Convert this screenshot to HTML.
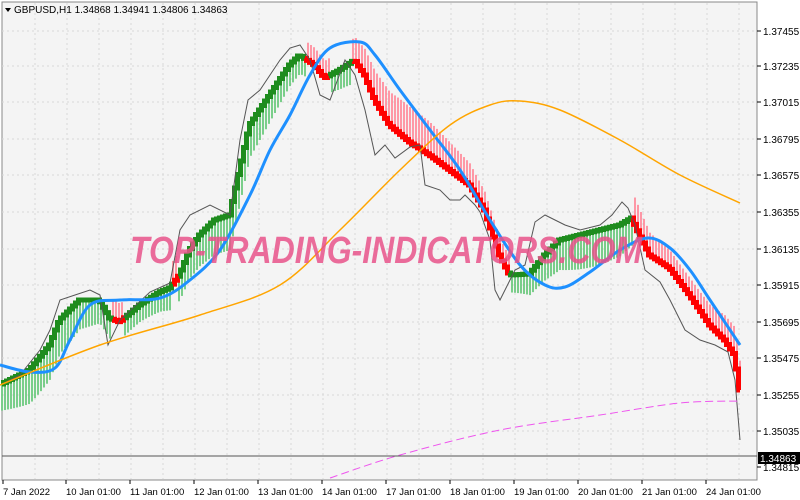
<!DOCTYPE html>
<html><head><meta charset="utf-8"><style>
html,body{margin:0;padding:0;background:#fff;width:800px;height:500px;overflow:hidden}
svg{display:block}
text{font-family:"Liberation Sans",sans-serif;font-size:10px;fill:#000}
</style></head><body>
<svg id="s" width="800" height="500" xmlns="http://www.w3.org/2000/svg">
<rect x="0" y="0" width="800" height="500" fill="#fff"/>
<rect x="2" y="2" width="755" height="478" fill="#f4f4f4" stroke="#888" stroke-width="1"/>
<g id="grid" stroke="#d8d8d8" stroke-dasharray="2,3" stroke-width="1"></g>
<g id="bars"></g>
<g id="lines"></g>
<text x="130" y="263" font-weight="bold" font-style="italic" textLength="512" lengthAdjust="spacingAndGlyphs" style="font-size:38px;fill:#e8528a;fill-opacity:0.85">TOP-TRADING-INDICATORS.COM</text>
<line x1="2" y1="456" x2="757" y2="456" stroke="#555" stroke-width="1"/>
<path d="M5 8 L11 8 L8 12 Z" fill="#000"/>
<text x="14" y="13">GBPUSD,H1  1.34868 1.34941 1.34806 1.34863</text>
<g id="ax"></g>
<rect x="758" y="452" width="42" height="12" fill="#000"/>
<text x="760" y="462" style="fill:#fff">1.34863</text>
</svg>
<script>
var NS="http://www.w3.org/2000/svg";
function el(p,t,a){var e=document.createElementNS(NS,t);for(var k in a)e.setAttribute(k,a[k]);document.getElementById(p).appendChild(e);return e;}
var prices=[["1.37455",31],["1.37235",66],["1.37015",102],["1.36795",139],["1.36575",175],["1.36355",212],["1.36135",249],["1.35915",285],["1.35695",322],["1.35475",358],["1.35255",395],["1.35035",431],["1.34815",467]];
prices.forEach(function(p){
 if(p[1]<450)el('grid','line',{x1:2,y1:p[1],x2:757,y2:p[1]});
 el('ax','line',{x1:757,y1:p[1],x2:761,y2:p[1],stroke:'#000'});
 var t=el('ax','text',{x:763,y:p[1]+4});t.textContent=p[0];});
for(var gx=35;gx<757;gx+=32)el('grid','line',{x1:gx,y1:3,x2:gx,y2:479});
var times=[["7 Jan 2022",3],["10 Jan 01:00",66],["11 Jan 01:00",130],["12 Jan 01:00",194],["13 Jan 01:00",258],["14 Jan 01:00",322],["17 Jan 01:00",386],["18 Jan 01:00",450],["19 Jan 01:00",514],["20 Jan 01:00",578],["21 Jan 01:00",642],["24 Jan 01:00",706]];
times.forEach(function(t,i){var x=t[1];
 el('ax','line',{x1:x,y1:480,x2:x,y2:484,stroke:'#000'});
 var e=el('ax','text',{x:x+(i==0?0:0),y:495,style:'font-size:9.5px'});e.textContent=t[0];});
function interp(pts,x){for(var i=0;i<pts.length-1;i++){if(x>=pts[i][0]&&x<=pts[i+1][0]){var f=(x-pts[i][0])/(pts[i+1][0]-pts[i][0]);return pts[i][1]+f*(pts[i+1][1]-pts[i][1]);}}return pts[pts.length-1][1];}
function pl(pts){return pts.map(function(p){return p[0]+','+p[1]}).join(' ');}
function smooth(pts){var d='M'+pts[0][0]+','+pts[0][1];for(var i=0;i<pts.length-1;i++){var p0=pts[i-1]||pts[i],p1=pts[i],p2=pts[i+1],p3=pts[i+2]||p2;
 d+=' C'+(p1[0]+(p2[0]-p0[0])/6)+','+(p1[1]+(p2[1]-p0[1])/6)+' '+(p2[0]-(p3[0]-p1[0])/6)+','+(p2[1]-(p3[1]-p1[1])/6)+' '+p2[0]+','+p2[1];}return d;}
var mid=[[0,385],[30,370],[50,345],[60,320],[80,300],[100,300],[110,318],[120,322],[140,305],[160,292],[170,288],[180,275],[190,250],[200,235],[215,220],[230,215],[240,170],[250,125],[270,95],[290,65],[300,55],[315,65],[325,78],[340,70],[355,60],[365,75],[375,100],[390,125],[410,142],[430,155],[450,170],[470,185],[485,210],[500,255],[510,275],[530,274],[545,255],[560,240],[580,235],[600,230],[620,225],[632,218],[640,235],[650,255],[670,268],[690,295],[710,325],[725,340],[735,355],[740,390]];
function isRed(x){return (x>112&&x<124)||(x>172&&x<178)||(x>305&&x<330)||(x>352&&x<510)||(x>632);}
for(var x=2;x<=740;x+=3){var y=interp(mid,x);var r=isRed(x);
 var L=26+9*Math.sin(x/29);
 el('bars','line',{x1:x,y1:y,x2:x,y2:r?y-L:y+L,stroke:r?'#ff8d9d':'#6cc97e','stroke-width':1.8});
}
for(var x=2;x<740;x+=3){var y1=interp(mid,x),y2=interp(mid,x+3);var r=isRed(x+1);
 var xm=x+1.5;
 el('lines','path',{d:'M'+x+','+y1+' H'+xm+' V'+y2+' H'+(x+3),fill:'none',stroke:r?'#ff0000':'#1e8c1e','stroke-width':5});}
var blk=[[0,385],[20,375],[40,350],[50,330],[60,300],[75,295],[90,290],[100,295],[108,345],[120,320],[150,292],[170,283],[180,230],[190,215],[210,205],[230,215],[240,140],[248,100],[260,90],[280,60],[290,48],[300,45],[310,60],[320,95],[330,100],[345,60],[355,75],[365,110],[375,155],[385,145],[395,158],[410,147],[420,145],[425,185],[440,190],[450,200],[460,200],[465,195],[475,205],[480,212],[490,240],[495,290],[500,300],[505,290],[515,270],[525,265],[535,222],[545,215],[555,220],[565,225],[580,230],[600,225],[612,215],[622,202],[628,208],[635,225],[645,270],[660,282],[670,300],[685,330],[700,340],[715,345],[728,352],[735,380],[740,440]];
el('lines','polyline',{points:pl(blk),fill:'none',stroke:'#555','stroke-width':1});
var blue=[[0,365],[30,372],[55,368],[70,340],[90,305],[120,300],[160,298],[190,280],[220,250],[250,195],[270,150],[290,115],[310,75],[330,48],[360,42],[375,55],[400,90],[430,130],[460,170],[490,220],[520,265],[545,285],[565,287],[590,272],[620,250],[648,238],[670,248],[690,270],[710,300],[740,345]];
el('lines','path',{d:smooth(blue),fill:'none',stroke:'#1e90ff','stroke-width':3});
var org=[[0,385],[100,345],[200,315],[280,285],[340,230],[400,170],[450,125],[490,105],[520,101],[560,110],[620,140],[680,175],[740,203]];
el('lines','path',{d:smooth(org),fill:'none',stroke:'#ffa500','stroke-width':1.5});
var mag=[[330,478],[400,455],[500,430],[600,415],[680,403],[740,401]];
el('lines','path',{d:smooth(mag),fill:'none',stroke:'#ee55ee','stroke-width':1,'stroke-dasharray':'8,4'});
</script>
</body></html>
